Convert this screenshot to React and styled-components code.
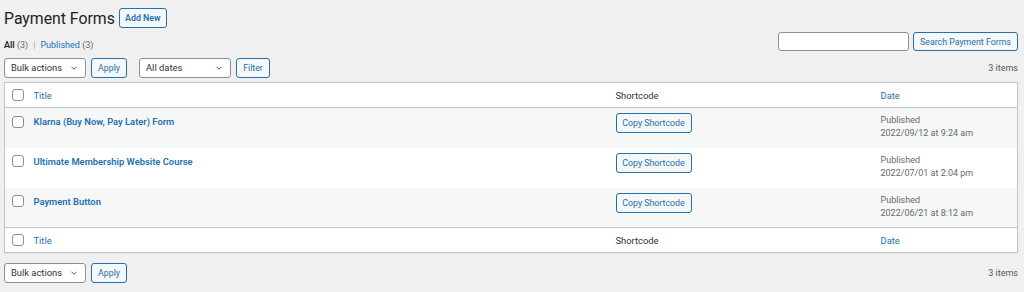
import styled, { createGlobalStyle } from 'styled-components';

const GlobalStyle = createGlobalStyle`
  html, body {
    margin: 0;
    background: #f0f0f1;
  }
  body {
    font-family: Roboto, "Liberation Sans", sans-serif;
    font-size: 9.4px;
    color: #3c434a;
  }
`;

const Wrap = styled.div`
  padding: 0 6px 0 4px;
  width: 1014px;
`;

const HeadLine = styled.div`
  display: flex;
  align-items: center;
  gap: 4px;
  height: 36px;
`;

const PageTitle = styled.h1`
  margin: 0;
  font-size: 15.8px;
  font-weight: 400;
  color: #1d2327;
`;

const Button = styled.button`
  font-family: inherit;
  font-size: 8.8px;
  font-weight: ${(p) => (p.$strong ? 600 : 400)};
  color: #2271b1;
  background: #f6f7f7;
  border: 1px solid #2271b1;
  border-radius: 3px;
  height: ${(p) => p.$h || 20}px;
  width: ${(p) => (p.$w ? `${p.$w}px` : 'auto')};
  padding: 0;
  cursor: pointer;
  white-space: nowrap;
`;

const TopBar = styled.div`
  display: flex;
  justify-content: space-between;
  align-items: flex-start;
`;

const Subsub = styled.div`
  margin-top: 4px;
  font-size: 9px;
  color: #646970;
  b { color: #1d2327; font-weight: 600; }
  a { color: #2271b1; text-decoration: none; }
  span.sep { margin: 0 5px; color: #a7aaad; }
`;

const SearchBox = styled.div`
  display: flex;
  gap: 4px;
  margin-top: -4px;
`;

const Input = styled.input`
  width: 131px;
  height: 19px;
  box-sizing: border-box;
  border: 1px solid #8c8f94;
  border-radius: 3px;
  background: #fff;
`;

const NavBar = styled.div`
  display: flex;
  align-items: center;
  height: 21px;
  margin: ${(p) => p.$m || '0'};
`;

const Actions = styled.div`
  display: flex;
  align-items: center;
  gap: 5px;
  margin-right: 12px;
`;

const Select = styled.div`
  width: ${(p) => p.$w}px;
  height: 20px;
  box-sizing: border-box;
  border: 1px solid #8c8f94;
  border-radius: 3px;
  background: #fff;
  display: flex;
  align-items: center;
  justify-content: space-between;
  padding: 0 6px 0 6px;
  font-size: 9.4px;
  color: #2c3338;
  svg { width: 10px; height: 10px; }
`;

const Count = styled.div`
  margin-left: auto;
  font-size: 9px;
  color: #50575e;
`;

const Table = styled.table`
  width: 100%;
  border-collapse: collapse;
  background: #fff;
  border: 1px solid #c3c4c7;
  box-shadow: 0 1px 1px rgba(0, 0, 0, 0.04);
  margin-top: 4px;
  table-layout: fixed;
`;

const HeadCell = styled.th`
  text-align: left;
  font-weight: 400;
  font-size: 9.4px;
  height: 25px;
  padding: 0 6px;
  color: ${(p) => (p.$link ? '#2271b1' : '#2c3338')};
  border-${(p) => (p.$foot ? 'top' : 'bottom')}: 1px solid #c3c4c7;
  box-sizing: border-box;
`;

const Row = styled.tr`
  background: ${(p) => (p.$alt ? '#f6f7f7' : '#fff')};
`;

const Cell = styled.td`
  vertical-align: top;
  padding: ${(p) => p.$pad || '7px 6px 0'};
  height: 40px;
  box-sizing: border-box;
  font-size: 9px;
  color: #646970;
  line-height: 13px;
`;

const RowTitle = styled.a`
  color: #2271b1;
  font-weight: 600;
  font-size: 9.4px;
  text-decoration: none;
`;

const Check = styled.span`
  display: inline-block;
  width: 10px;
  height: 10px;
  border: 1px solid #8c8f94;
  border-radius: 3px;
  background: #fff;
  vertical-align: middle;
`;

const Chevron = () => (
  <svg viewBox="0 0 20 20" fill="none" stroke="#50575e" strokeWidth="2">
    <path d="M5 7.5l5 5 5-5" />
  </svg>
);

const rows = [
  { title: 'Klarna (Buy Now, Pay Later) Form', date: '2022/09/12 at 9:24 am' },
  { title: 'Ultimate Membership Website Course', date: '2022/07/01 at 2:04 pm' },
  { title: 'Payment Button', date: '2022/06/21 at 8:12 am' },
];

function HeaderRow({ foot }) {
  return (
    <tr>
      <HeadCell $foot={foot} style={{ width: 23, paddingLeft: 7 }}>
        <Check />
      </HeadCell>
      <HeadCell $foot={foot} $link>Title</HeadCell>
      <HeadCell $foot={foot} style={{ width: 265 }}>Shortcode</HeadCell>
      <HeadCell $foot={foot} $link style={{ width: 143 }}>Date</HeadCell>
    </tr>
  );
}

function Bulk() {
  return (
    <Actions>
      <Select $w={82}>Bulk actions<Chevron /></Select>
      <Button $h={20} $w={36}>Apply</Button>
    </Actions>
  );
}

export default function App() {
  return (
    <Wrap>
      <GlobalStyle />
      <HeadLine>
        <PageTitle>Payment Forms</PageTitle>
        <Button $strong $h={20} $w={48}>Add New</Button>
      </HeadLine>
      <TopBar>
        <Subsub>
          <b>All</b> (3)<span className="sep">|</span><a>Published</a> (3)
        </Subsub>
        <SearchBox>
          <Input />
          <Button $h={19} $w={105}>Search Payment Forms</Button>
        </SearchBox>
      </TopBar>
      <NavBar $m="6px 0 0">
        <Bulk />
        <Actions>
          <Select $w={92}>All dates<Chevron /></Select>
          <Button $h={20} $w={34}>Filter</Button>
        </Actions>
        <Count>3 items</Count>
      </NavBar>
      <Table>
        <thead>
          <HeaderRow />
        </thead>
        <tbody>
          {rows.map((r, i) => (
            <Row key={r.title} $alt={i % 2 === 0}>
              <Cell $pad="7px 6px 0 7px"><Check /></Cell>
              <Cell><RowTitle>{r.title}</RowTitle></Cell>
              <Cell $pad="5px 6px 0">
                <Button $h={20} $w={76}>Copy Shortcode</Button>
              </Cell>
              <Cell $pad="6px 6px 0">
                Published
                <br />
                {r.date}
              </Cell>
            </Row>
          ))}
        </tbody>
        <tfoot>
          <HeaderRow foot />
        </tfoot>
      </Table>
      <NavBar $m="9px 0 0">
        <Bulk />
        <Count>3 items</Count>
      </NavBar>
    </Wrap>
  );
}
